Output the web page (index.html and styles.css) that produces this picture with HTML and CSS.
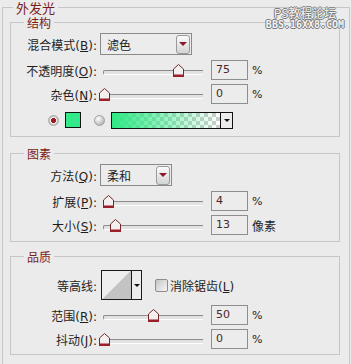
FILE: index.html
```html
<!DOCTYPE html>
<html>
<head>
    <meta charset="utf-8">
    <title>外发光</title>
    <link rel="stylesheet" href="styles.css">
</head>
<body>
    <!-- forum watermark over the top right corner -->
    <div class="watermark">
        <div class="wm-cn">PS教程论坛</div>
        <div class="wm-en">BBS.16XX8.COM</div>
    </div>

    <fieldset class="outer">
        <legend class="outer-title">外发光</legend>

        <!-- 结构 -->
        <fieldset class="group">
            <legend>结构</legend>
            <div class="row row-select">
                <label class="lbl">混合模式(<u>B</u>):</label>
                <div class="select select-wide"><span>滤色</span><span class="select-btn"><i></i></span></div>
            </div>
            <div class="row">
                <label class="lbl">不透明度(<u>O</u>):</label>
                <div class="slider">
                    <span class="thumb" style="left: 75px"><svg width="11" height="13" viewBox="0 0 11 13"><polygon points="5.5,0.5 10.5,5 10.5,11.5 0.5,11.5 0.5,5" fill="#f4efef" stroke="#6e2a2a"/><rect x="0" y="10.5" width="11" height="2.5" fill="#9c1f2a"/></svg></span>
                </div>
                <span class="num">75</span>
                <span class="unit">%</span>
            </div>
            <div class="row">
                <label class="lbl">杂色(<u>N</u>):</label>
                <div class="slider">
                    <span class="thumb" style="left: 1px"><svg width="11" height="13" viewBox="0 0 11 13"><polygon points="5.5,0.5 10.5,5 10.5,11.5 0.5,11.5 0.5,5" fill="#f4efef" stroke="#6e2a2a"/><rect x="0" y="10.5" width="11" height="2.5" fill="#9c1f2a"/></svg></span>
                </div>
                <span class="num">0</span>
                <span class="unit">%</span>
            </div>
            <div class="row row-color">
                <span class="radio radio-on"></span>
                <span class="swatch"></span>
                <span class="radio radio-off"></span>
                <div class="gradient">
                    <span class="gradient-fill"></span>
                    <span class="gradient-btn"><i></i></span>
                </div>
            </div>
        </fieldset>

        <!-- 图素 -->
        <fieldset class="group group-pixel">
            <legend>图素</legend>
            <div class="row row-select">
                <label class="lbl">方法(<u>Q</u>):</label>
                <div class="select select-narrow"><span>柔和</span><span class="select-btn"><i></i></span></div>
            </div>
            <div class="row">
                <label class="lbl">扩展(<u>P</u>):</label>
                <div class="slider">
                    <span class="thumb" style="left: 5px"><svg width="11" height="13" viewBox="0 0 11 13"><polygon points="5.5,0.5 10.5,5 10.5,11.5 0.5,11.5 0.5,5" fill="#f4efef" stroke="#6e2a2a"/><rect x="0" y="10.5" width="11" height="2.5" fill="#9c1f2a"/></svg></span>
                </div>
                <span class="num">4</span>
                <span class="unit">%</span>
            </div>
            <div class="row">
                <label class="lbl">大小(<u>S</u>):</label>
                <div class="slider">
                    <span class="thumb" style="left: 12px"><svg width="11" height="13" viewBox="0 0 11 13"><polygon points="5.5,0.5 10.5,5 10.5,11.5 0.5,11.5 0.5,5" fill="#f4efef" stroke="#6e2a2a"/><rect x="0" y="10.5" width="11" height="2.5" fill="#9c1f2a"/></svg></span>
                </div>
                <span class="num">13</span>
                <span class="unit unit-cn">像素</span>
            </div>
        </fieldset>

        <!-- 品质 -->
        <fieldset class="group group-quality">
            <legend>品质</legend>
            <div class="row row-contour">
                <label class="lbl">等高线:</label>
                <div class="contour">
                    <span class="contour-curve"></span>
                    <span class="contour-btn"><i></i></span>
                </div>
                <span class="checkbox"></span>
                <span class="check-label">消除锯齿(<u>L</u>)</span>
            </div>
            <div class="row">
                <label class="lbl">范围(<u>R</u>):</label>
                <div class="slider">
                    <span class="thumb" style="left: 50px"><svg width="11" height="13" viewBox="0 0 11 13"><polygon points="5.5,0.5 10.5,5 10.5,11.5 0.5,11.5 0.5,5" fill="#f4efef" stroke="#6e2a2a"/><rect x="0" y="10.5" width="11" height="2.5" fill="#9c1f2a"/></svg></span>
                </div>
                <span class="num">50</span>
                <span class="unit">%</span>
            </div>
            <div class="row">
                <label class="lbl">抖动(<u>J</u>):</label>
                <div class="slider">
                    <span class="thumb" style="left: 1px"><svg width="11" height="13" viewBox="0 0 11 13"><polygon points="5.5,0.5 10.5,5 10.5,11.5 0.5,11.5 0.5,5" fill="#f4efef" stroke="#6e2a2a"/><rect x="0" y="10.5" width="11" height="2.5" fill="#9c1f2a"/></svg></span>
                </div>
                <span class="num">0</span>
                <span class="unit">%</span>
            </div>
        </fieldset>
    </fieldset>
</body>
</html>
```

FILE: styles.css
```css
/* Layer style dialog: outer glow */
* {
    box-sizing: border-box;
}

body {
    margin: 0;
    width: 351px;
    height: 364px;
    overflow: hidden;
    position: relative;
    background: #ebebeb;
    font-family: "DejaVu Sans", "Noto Sans CJK SC", sans-serif;
    font-size: 12px;
    color: #1e1e1e;
}

u {
    text-underline-offset: 1px;
}

/* group boxes */
.outer {
    margin: 0 1px 0 2px;
    padding: 1px 9px 10px 7px;
    border: 1px solid #c6c6c6;
    min-width: 0;
}

.outer-title {
    margin-left: 3px;
    padding: 0 3px;
    font-family: "Noto Sans CJK SC", sans-serif;
    font-size: 13px;
    line-height: 15px;
    color: #7a1c1c;
}

.group {
    margin: 0;
    padding: 4px 0 4px 13px;
    border: 1px solid #c6c6c6;
    min-width: 0;
}

.group legend {
    padding: 0 3px;
    font-family: "Noto Sans CJK SC", sans-serif;
    font-size: 12px;
    line-height: 13px;
    color: #7a1c1c;
}

.group-pixel {
    margin-top: 10px;
}

.group-quality {
    margin-top: 8px;
    padding-top: 7px;
    padding-bottom: 3px;
}

/* rows */
.row {
    display: flex;
    align-items: center;
    height: 24px;
}

.row-select {
    height: 22px;
}

.row-select + .row,
.row-contour + .row {
    margin-top: 3px;
}

.row-color {
    margin-top: 2px;
}

.row-contour {
    height: 30px;
}

.lbl {
    flex: none;
    width: 73px;
    text-align: right;
    white-space: nowrap;
}

/* dropdowns */
.select {
    flex: none;
    margin-left: 3px;
    height: 22px;
    padding-left: 6px;
    border: 1px solid #8a8a8a;
    background: #ececec;
    display: flex;
    align-items: center;
    justify-content: space-between;
    font-family: "Noto Sans CJK SC", sans-serif;
}

.select-wide {
    width: 92px;
}

.select-narrow {
    width: 72px;
}

.select-btn {
    width: 14px;
    height: 19px;
    margin-right: 1px;
    border: 1px solid #9a9a9a;
    border-radius: 3px;
    background: linear-gradient(#fbfbfb, #d4d4d4);
    display: flex;
    align-items: center;
    justify-content: center;
}

.select-btn i {
    width: 0;
    height: 0;
    border-left: 4px solid transparent;
    border-right: 4px solid transparent;
    border-top: 4px solid #8e1a28;
}

/* sliders */
.slider {
    flex: none;
    position: relative;
    width: 100px;
    height: 24px;
    margin-left: 6px;
}

.slider::before {
    content: "";
    position: absolute;
    left: 0;
    right: 0;
    top: 12px;
    height: 3px;
    border-top: 1px solid #8c8c8c;
    border-left: 1px solid #8c8c8c;
    border-bottom: 1px solid #fdfdfd;
    border-radius: 2px 0 0 2px;
    background: #e2e2e2;
}

.thumb {
    position: absolute;
    top: 6px;
    margin-left: -5px;
    width: 11px;
    height: 13px;
}

.thumb svg {
    display: block;
}

.num {
    flex: none;
    margin-left: 8px;
    width: 37px;
    height: 20px;
    padding-left: 4px;
    border: 1px solid #8e8e8e;
    background: #ececec;
    font-size: 11px;
    line-height: 18px;
    color: #4a2626;
}

.unit {
    margin-left: 4px;
    font-size: 11px;
}

.unit-cn {
    font-family: "Noto Sans CJK SC", sans-serif;
    font-size: 12px;
}

/* colour row */
.radio {
    flex: none;
    width: 11px;
    height: 11px;
    border-radius: 50%;
}

.radio-on {
    margin-left: 24px;
    border: 1px solid #a8a8a8;
    background: radial-gradient(circle, #9c1620 0 2.2px, #f2eaea 2.8px 3.2px, #c6c6c6 4px);
}

.radio-off {
    margin-left: 13px;
    border: 1px solid #a0a0a0;
    background: radial-gradient(circle at 35% 30%, #ffffff, #b3b3b3 80%);
}

.swatch {
    flex: none;
    margin-left: 6px;
    width: 16px;
    height: 16px;
    border: 1px solid #111;
    background: #33ea88;
}

.gradient {
    flex: none;
    margin-left: 6px;
    width: 122px;
    height: 17px;
    border: 1px solid #111;
    display: flex;
}

.gradient-fill {
    flex: 1;
    background:
        linear-gradient(to right, #2fe884, rgba(47, 232, 132, 0)),
        repeating-conic-gradient(#cdcdcd 0 25%, #ffffff 0 50%) 0 0 / 8px 8px;
}

.gradient-btn,
.contour-btn {
    flex: 1;
    display: flex;
    align-items: center;
    justify-content: center;
    background: #ececec;
}

.gradient-btn {
    flex: none;
    width: 12px;
    border-left: 1px solid #111;
}

.gradient-btn i,
.contour-btn i {
    width: 0;
    height: 0;
    border-left: 3px solid transparent;
    border-right: 3px solid transparent;
    border-top: 3px solid #111;
}

/* contour */
.contour {
    flex: none;
    margin-left: 4px;
    width: 41px;
    height: 30px;
    border: 1px solid #1a1a1a;
    display: flex;
}

.contour-curve {
    width: 30px;
    border-right: 1px solid #1a1a1a;
    background: linear-gradient(to top left, #c3c3c3 50%, #eeeeee 50%);
}

.checkbox {
    flex: none;
    margin-left: 13px;
    width: 13px;
    height: 13px;
    border: 1px solid #8c8c8c;
    border-radius: 2px;
    background: linear-gradient(135deg, #c6c6c6, #f6f6f6);
}

.check-label {
    margin-left: 2px;
    white-space: nowrap;
}

/* watermark */
.watermark {
    position: absolute;
    top: 6px;
    right: 4px;
    width: 84px;
    text-align: center;
    color: #f4f4f4;
    text-shadow: 1px 0 #7a7a7a, -1px 0 #7a7a7a, 0 1px #7a7a7a, 0 -1px #7a7a7a;
}

.wm-cn {
    font-family: "Noto Sans CJK SC", sans-serif;
    font-size: 12px;
    line-height: 13px;
}

.wm-en {
    font-family: "DejaVu Sans Mono", monospace;
    font-size: 10px;
    line-height: 11px;
    font-weight: bold;
}
```
